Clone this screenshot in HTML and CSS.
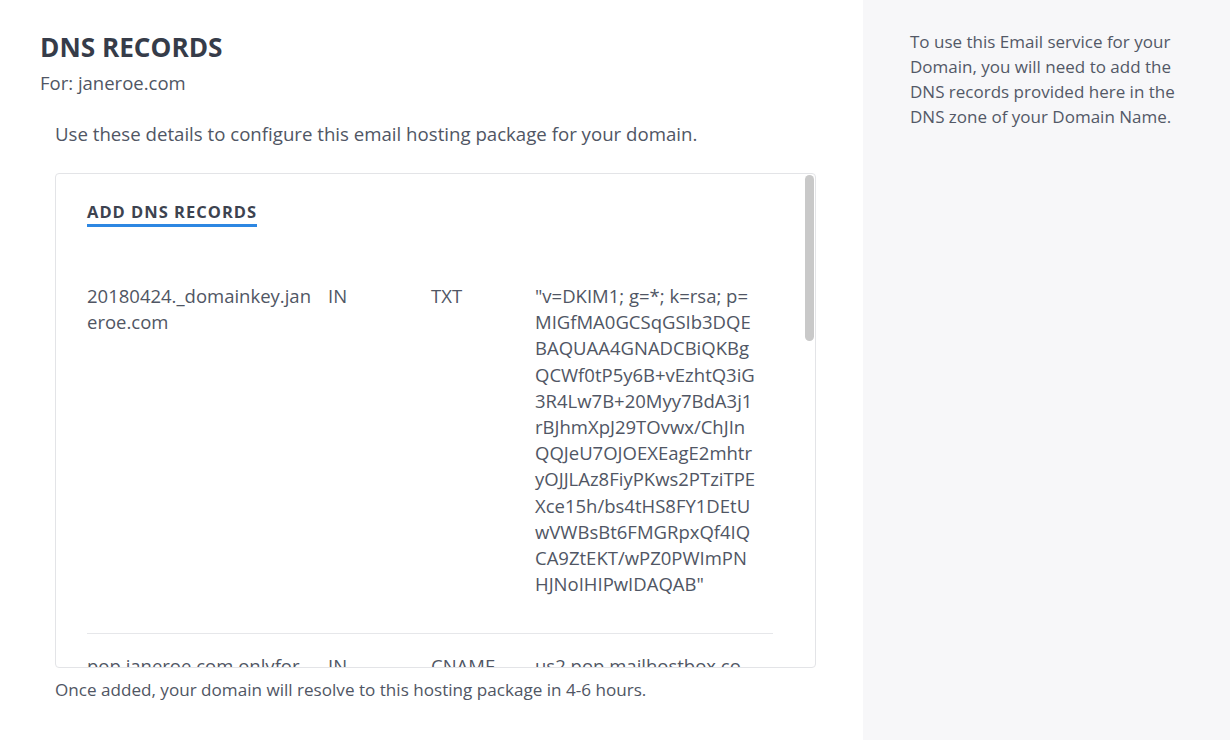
FILE: index.html
```html
<!DOCTYPE html>
<html lang="en">
<head>
<meta charset="utf-8">
<title>DNS Records</title>
<link rel="stylesheet" href="styles.css">
</head>
<body>
<div class="page">
  <main class="main">
    <h1 class="title">DNS RECORDS</h1>
    <div class="for">For: janeroe.com</div>
    <div class="content">
      <p class="intro">Use these details to configure this email hosting package for your domain.</p>
      <div class="box">
        <div class="box-scroll">
          <div class="box-head"><span class="tab">ADD DNS RECORDS</span></div>
          <div class="records">
            <div class="row">
              <div class="c name">20180424._domainkey.jan<br>eroe.com</div>
              <div class="c cls">IN</div>
              <div class="c type">TXT</div>
              <div class="c val">"v=DKIM1; g=*; k=rsa; p=<br>MIGfMA0GCSqGSIb3DQE<br>BAQUAA4GNADCBiQKBg<br>QCWf0tP5y6B+vEzhtQ3iG<br>3R4Lw7B+20Myy7BdA3j1<br>rBJhmXpJ29TOvwx/ChJIn<br>QQJeU7OJOEXEagE2mhtr<br>yOJJLAz8FiyPKws2PTziTPE<br>Xce15h/bs4tHS8FY1DEtU<br>wVWBsBt6FMGRpxQf4IQ<br>CA9ZtEKT/wPZ0PWImPN<br>HJNoIHIPwIDAQAB"</div>
            </div>
            <div class="row">
              <div class="c name">pop.janeroe.com.onlyfor<br>.mailhostbox.com</div>
              <div class="c cls">IN</div>
              <div class="c type">CNAME</div>
              <div class="c val">us2.pop.mailhostbox.co<br>m</div>
            </div>
            <div class="row">
              <div class="c name">imap.janeroe.com.onlyfo<br>r.mailhostbox.com</div>
              <div class="c cls">IN</div>
              <div class="c type">CNAME</div>
              <div class="c val">us2.imap.mailhostbox.co<br>m</div>
            </div>
          </div>
        </div>
        <div class="thumb"></div>
      </div>
      <p class="note">Once added, your domain will resolve to this hosting package in 4-6 hours.</p>
    </div>
  </main>
  <aside class="side">
    <p class="side-text">To use this Email service for your Domain, you will need to add the DNS records provided here in the DNS zone of your Domain Name.</p>
  </aside>
</div>
</body>
</html>
```

FILE: styles.css
```css
* { box-sizing: border-box; }
html, body { margin: 0; padding: 0; }
body {
  font-family: "Open Sans", "Noto Sans", sans-serif;
  color: #505664;
  background: #ffffff;
}
.page {
  display: flex;
  min-height: 740px;
}
.main {
  width: 863px;
  flex: none;
  padding: 32px 0 0 40px;
}
.title {
  margin: 0;
  font-size: 26.2px;
  line-height: 30px;
  font-weight: 700;
  color: #363c49;
}
.for {
  margin-top: 9px;
  font-size: 18.5px;
  line-height: 24px;
}
.content {
  padding-left: 15px;
}
.intro {
  margin: 26px 0 0;
  font-size: 18.65px;
  line-height: 26px;
}
.box {
  position: relative;
  margin-top: 26px;
  width: 761px;
  height: 495px;
  border: 1px solid #e3e4e7;
  border-radius: 4px;
  overflow: hidden;
}
.box-scroll {
  height: 100%;
  overflow: hidden;
  padding: 27px 42px 0 31px;
}
.thumb {
  position: absolute;
  right: 1px;
  top: 1px;
  width: 9px;
  height: 166px;
  border-radius: 5px;
  background: #c9c9c9;
}
.box-head {
  height: 57px;
}
.tab {
  display: inline-block;
  font-size: 16.5px;
  line-height: 22px;
  font-weight: 700;
  letter-spacing: 1px;
  color: #3d4350;
  padding-bottom: 1px;
  border-bottom: 3px solid #2d87e2;
}
.row {
  display: grid;
  grid-template-columns: 241px 103px 104px 238px;
  padding: 25px 0 36px;
  border-bottom: 1px solid #e6e7ea;
}
.row + .row { padding-top: 19px; }
.c {
  font-size: 18.5px;
  line-height: 26.2px;
  white-space: nowrap;
  padding-right: 8px;
}
.val { padding-right: 0; }
.note {
  margin: 11px 0 0;
  font-size: 17.1px;
  line-height: 22px;
}
.side {
  flex: 1;
  background: #f7f7f9;
  padding: 29px 40px 0 47px;
}
.side-text {
  margin: 0;
  max-width: 280px;
  font-size: 17px;
  line-height: 25px;
  color: #535967;
}
```
